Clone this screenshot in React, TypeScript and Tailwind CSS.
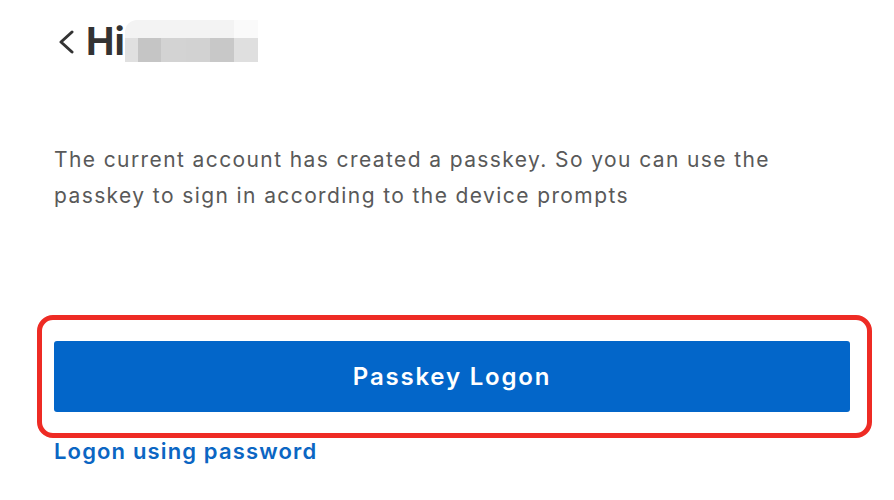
const MOSAIC_BOTTOM = [
  { w: "w-[13px]", c: "bg-[#e0e0e0]" },
  { w: "w-[23px]", c: "bg-[#c5c5c5]" },
  { w: "w-[25px]", c: "bg-[#d3d3d3]" },
  { w: "w-[24px]", c: "bg-[#d2d2d2]" },
  { w: "w-[24px]", c: "bg-[#c8c8c8]" },
  { w: "w-[24px]", c: "bg-[#dfdfdf]" },
];

function NameMosaic() {
  return (
    <div className="flex w-[133px] flex-col overflow-hidden rounded-tl-[12px]">
      <div className="flex h-[18px]">
        <div className="w-[109px] bg-[#f3f3f3]" />
        <div className="w-[24px] bg-[#fafafa]" />
      </div>
      <div className="flex h-[24px]">
        {MOSAIC_BOTTOM.map((cell, i) => (
          <div key={i} className={`${cell.w} ${cell.c}`} />
        ))}
      </div>
    </div>
  );
}

export default function App() {
  return (
    <main
      className="h-[500px] w-[894px] overflow-hidden bg-white"
      style={{ fontFamily: "Inter, 'Noto Sans', sans-serif" }}
    >
      <section className="pt-[20px]">
        <div className="flex h-[42px] items-center pl-[58px]">
          <svg width="16" height="24" viewBox="0 0 16 24" className="mt-[2px]" fill="none">
            <path d="M14 2 L3 12 L14 22" stroke="#333" strokeWidth="3" strokeLinecap="round" strokeLinejoin="round" />
          </svg>
          <h1 className="ml-[12px] text-[38px] font-bold leading-[38px] text-[#333]">Hi</h1>
          <NameMosaic />
        </div>

        <p className="mt-[80px] pl-[54px] text-[21px] leading-[36px] tracking-[1.4px] text-[#595959]">
          The current account has created a passkey. So you can use the
          <br />
          passkey to sign in according to the device prompts
        </p>

        <div className="ml-[37px] mt-[101px] w-[835px] rounded-[16px] border-[5px] border-[#ee2b24] py-[21px] pl-[12px] pr-[17px]">
          <button className="flex h-[71px] w-full items-center justify-center rounded-[3px] bg-[#0366c9] text-[24px] font-semibold tracking-[1.8px] text-white">
            Passkey Logon
          </button>
        </div>

        <a href="#" className="ml-[54px] mt-[2px] block text-[22px] font-semibold leading-[22px] tracking-[1.15px] text-[#0b66c3]">
          Logon using password
        </a>
      </section>
    </main>
  );
}
